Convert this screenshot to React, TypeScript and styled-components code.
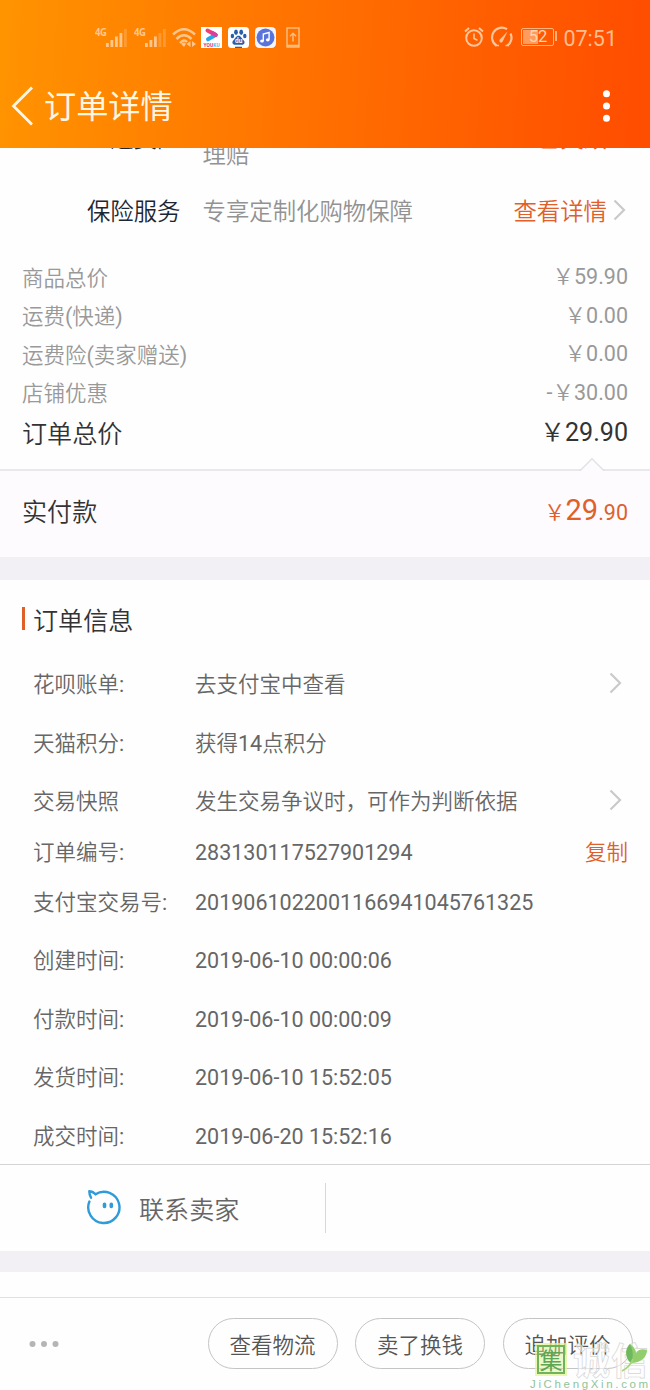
import React from 'react';
import styled, { createGlobalStyle } from 'styled-components';

const Global = createGlobalStyle`
  * { box-sizing: border-box; }
  html, body { margin: 0; padding: 0; background: #fdfdfe; }
  body {
    font-family: Roboto, "Noto Sans CJK SC DemiLight", "Noto Sans CJK SC Light", "Noto Sans CJK SC", sans-serif;
    overflow: hidden;
  }
`;

const Screen = styled.main`
  position: relative;
  width: 650px;
  height: 1390px;
  overflow: hidden;
  display: flex;
  flex-direction: column;
  background: #fefefe;
`;

/* ---------- header ---------- */

const Header = styled.header`
  flex: none;
  position: relative;
  z-index: 1;
  height: 148px;
  background: linear-gradient(94deg, #ff9400 0%, #ff7200 46%, #ff4e00 97%);
`;

const StatusBar = styled.div`
  height: 74px;
  display: flex;
  justify-content: space-between;
  padding: 26px 33px 0 95px;
  color: #ffc791;
`;

const StatusGroup = styled.div`
  display: flex;
  height: 23px;
`;

const Network = styled.div`
  display: flex;
  width: 39px;
`;

const NetworkLabel = styled.span`
  font: 700 11px/12px "Open Sans", Roboto, sans-serif;
  letter-spacing: -0.6px;
  width: 11px;
  flex: none;
  transform: scaleX(0.86);
  transform-origin: left;
`;

const AppIcons = styled.div`
  display: flex;
  gap: 6px;
  padding-top: 1px;
  & > :first-child { margin: 0 -2px 0 -1px; }
  & > :last-child { margin-left: 4px; }
`;

const GaugeSlot = styled.span`
  margin-left: 6px;
`;

const Battery = styled.div`
  position: relative;
  width: 33px;
  height: 18px;
  margin: 2px 0 0 7px;
  border: 1.5px solid #ffb27c;
  border-radius: 2px;
  background: linear-gradient(90deg, #ff9c5c 52%, transparent 52%);
  background-clip: content-box;
  padding: 1px;
  font: 400 16.5px/14px Roboto, sans-serif;
  text-align: center;
  color: #ffd3b0;
  &::after {
    content: '';
    position: absolute;
    left: 33px;
    top: 2px;
    width: 2px;
    height: 10px;
    background: #ffb27c;
  }
`;

const Clock = styled.span`
  margin-left: 9px;
  font: 400 21.5px/25px Roboto, sans-serif;
  color: #ffbd90;
`;

const TitleBar = styled.div`
  height: 64px;
  display: flex;
  align-items: center;
  padding: 0 38px 1px 10px;
`;

const Title = styled.h1`
  flex: 1;
  margin: 0 0 0 9px;
  padding-top: 3px;
  font: 400 32.2px/48px Roboto, "Noto Sans CJK SC", sans-serif;
  color: #fff7e6;
`;

/* ---------- services ---------- */

const Services = styled.section`
  flex: none;
  height: 140px;
  margin-top: -30px;
  font-size: 23.4px;
  line-height: 28px;
`;

const ServiceRow = styled.div<{ $height: number; $top: number }>`
  display: flex;
  height: ${p => p.$height}px;
  padding: ${p => p.$top}px 23px 0 0;
`;

const ServiceName = styled.span`
  width: 180.5px;
  text-align: right;
  color: #1c2733;
`;

const ServiceText = styled.span<{ $drop?: number }>`
  flex: 1;
  margin-left: 22px;
  padding-top: ${p => p.$drop ?? 0}px;
  color: #929292;
`;

const ServiceLink = styled.span`
  color: #e0602a;
  margin-right: 6px;
`;

const ArrowSlot = styled.span`
  display: flex;
  align-items: center;
  width: 14px;
  height: 24px;
`;

/* ---------- prices ---------- */

const Prices = styled.section`
  flex: none;
  height: 211px;
`;

const PriceRow = styled.div<{ $total?: boolean }>`
  display: flex;
  justify-content: space-between;
  align-items: center;
  height: ${p => (p.$total ? 43 : 38.5)}px;
  padding: ${p => (p.$total ? 2 : 3)}px 22px 0;
  font-size: ${p => (p.$total ? 25.1 : 21.5)}px;
  line-height: 30px;
  color: ${p => (p.$total ? '#333' : '#999')};
`;

const Amount = styled.span`
  padding-bottom: 3px;
`;

const Paid = styled.section`
  flex: none;
  position: relative;
  display: flex;
  justify-content: space-between;
  align-items: center;
  height: 88px;
  padding: 0 22px 8px;
  border-top: 2px solid #eae8ed;
  background: #fdfbfe;
  font-size: 25.1px;
  color: #333;
`;

const Notch = styled.svg`
  position: absolute;
  top: -14px;
  right: 44px;
`;

const PaidAmount = styled.span`
  font-size: 21.5px;
  color: #e0602a;
  b {
    font-size: 29px;
    font-weight: 400;
  }
`;

const Band = styled.div<{ $height: number }>`
  flex: none;
  height: ${p => p.$height}px;
  background: #f2f0f4;
`;

/* ---------- order information ---------- */

const Info = styled.section`
  flex: none;
  height: 584px;
`;

const InfoTitle = styled.h2`
  display: flex;
  align-items: center;
  height: 76px;
  margin: 0;
  padding: 1px 0 0 21.5px;
  font-size: 25.1px;
  font-weight: 400;
  color: #333;
  &::before {
    content: '';
    width: 3.5px;
    height: 23px;
    margin-right: 8px;
    background: #e0602a;
  }
`;

const InfoRow = styled.div<{ $height: number }>`
  display: flex;
  align-items: center;
  height: ${p => p.$height}px;
  padding: 0 22px 0 33px;
  font-size: 21.5px;
  line-height: 30px;
  color: #666;
`;

const InfoLabel = styled.span`
  width: 162px;
`;

const InfoValue = styled.span`
  flex: 1;
`;

const CopyLink = styled.span`
  color: #e0602a;
`;

const RowArrow = styled.span`
  display: flex;
  width: 19px;
  padding-bottom: 4px;
`;

/* ---------- contact + bottom bar ---------- */

const Contact = styled.section`
  flex: none;
  display: flex;
  align-items: center;
  height: 87px;
  border-top: 1px solid #d4d4d4;
`;

const ContactSeller = styled.div`
  display: flex;
  align-items: center;
  gap: 17px;
  width: 326px;
  height: 50px;
  padding: 0 0 1px 85px;
  border-right: 1px solid #d8d8d8;
  font-size: 25.1px;
  color: #666;
`;

const Actions = styled.footer`
  flex: none;
  display: flex;
  align-items: center;
  height: 93px;
  margin-top: 25px;
  padding: 0 17.5px 1px 29px;
  border-top: 1px solid #e0e0e0;
`;

const MoreDots = styled.svg`
  margin-right: auto;
`;

const Pill = styled.button`
  width: 130px;
  height: 51px;
  margin: 0 0 0 17.5px;
  padding: 0 0 1px;
  border: 1px solid #c4c4c4;
  border-radius: 26px;
  background: transparent;
  font: inherit;
  font-size: 21.5px;
  color: #555;
`;

/* ---------- site watermark ---------- */

const Watermark = styled.div`
  position: absolute;
  left: 530px;
  top: 1341px;
  width: 120px;
  height: 49px;
`;

const MarkTop = styled.div`
  display: flex;
  align-items: center;
  height: 36px;
  padding-left: 7px;
`;

const Seal = styled.span`
  width: 28px;
  height: 29px;
  border: 2px solid #71b35c;
  outline: 2px solid rgba(225, 246, 150, 0.75);
  background: rgba(215, 242, 140, 0.45);
  font: 400 23px/24px "Noto Sans CJK SC", sans-serif;
  text-align: center;
  color: #5da653;
`;

const Outlined = styled.span`
  margin-left: 8px;
  font: 700 37px/36px "Noto Sans CJK SC", sans-serif;
  letter-spacing: 1px;
  color: rgba(255, 255, 255, 0.6);
  -webkit-text-stroke: 0.7px #d6d6d6;
`;

const Leaf = styled.svg`
  position: absolute;
  left: 90px;
  top: 2px;
`;

const Domain = styled.div`
  font: 400 11.5px/14px "Liberation Sans", sans-serif;
  letter-spacing: 2.65px;
  white-space: nowrap;
  color: #8fc59a;
`;

/* ---------- icons ---------- */

const Signal = ({ strong }: { strong: number }) => (
  <svg width="23" height="22" viewBox="0 0 23 22" fill="#ffc68c">
    {[4, 7, 10.5, 14, 18].map((h, i) => (
      <rect key={i} x={i * 4.5} y={21 - h} width="2.8" height={h} opacity={i < strong ? 1 : 0.35} />
    ))}
  </svg>
);

const Wifi = () => (
  <svg width="25" height="22" viewBox="0 0 25 22" fill="none" stroke="#ffc68c" strokeWidth="2.5">
    <path d="M1 7.5Q12 -3 23 7.5" />
    <path d="M4.5 12Q12 4.5 19.5 12" />
    <path d="M8 16Q12 11.500 15 15" />
    <path d="M12 20l-3-3.200q3-2.400 5 0z" fill="#ffc68c" stroke="none" />
    <path d="M18.500 14v6l-4-3zM20 14v6l4-3z" fill="#ffc68c" stroke="none" />
  </svg>
);

const VideoApp = () => (
  <svg width="21" height="21" viewBox="0 0 21 21">
    <rect width="21" height="21" fill="#fff" />
    <path d="M6.5 3.5L14.5 7.8" stroke="#f43f73" strokeWidth="4" strokeLinecap="round" />
    <path d="M14.5 8L7 12.3" stroke="#26a9ea" strokeWidth="4" strokeLinecap="round" />
    <path d="M11 5.8L14.8 8" stroke="#d8409b" strokeWidth="4" strokeLinecap="round" />
    <text x="2.6" y="19.6" fontSize="4.8" fontWeight="700" fontFamily="Roboto" fill="#c2347b" textLength="16">
      YOU<tspan fill="#4bbbe2">KU</tspan>
    </text>
  </svg>
);

const PawApp = () => (
  <svg width="21" height="21" viewBox="0 0 21 21">
    <rect width="21" height="21" rx="3.5" fill="#fff" />
    <g fill="#285fa9">
      <ellipse cx="8" cy="5.2" rx="1.9" ry="2.7" />
      <ellipse cx="13.2" cy="5.2" rx="1.9" ry="2.7" />
      <ellipse cx="4.4" cy="9" rx="1.7" ry="2.3" />
      <ellipse cx="16.8" cy="9" rx="1.7" ry="2.3" />
      <path d="M10.5 8.8c2.6 0 3 2.6 4.8 4.2 2.4 2 1.2 5-1.6 4.8-2.2-.2-4.2-.2-6.4 0-2.8.2-4-2.8-1.6-4.8 1.8-1.6 2.2-4.2 4.8-4.2z" />
      <rect x="7" y="19.7" width="7" height="1.3" />
    </g>
    <text x="7" y="16.4" fontSize="6.5" fontWeight="700" fontFamily="Roboto" fill="#fff">du</text>
  </svg>
);

const MusicApp = () => (
  <svg width="21" height="21" viewBox="0 0 21 21">
    <rect width="21" height="21" rx="4.5" fill="#f4f4ff" />
    <circle cx="10.5" cy="10.5" r="9" fill="#5a74dc" />
    <path d="M8.3 14V7l5.8-1.5v7" fill="none" stroke="#fff" strokeWidth="1.4" />
    <ellipse cx="7" cy="14" rx="1.9" ry="1.6" fill="#fff" />
    <ellipse cx="12.8" cy="12.8" rx="1.9" ry="1.6" fill="#fff" />
  </svg>
);

const PhoneUp = () => (
  <svg width="14" height="21" viewBox="0 0 14 21" fill="none" stroke="#ffbf80">
    <rect x="1" y="1" width="12" height="19" strokeWidth="1.4" />
    <path d="M1 18.7h12" strokeWidth="2" />
    <path d="M7 14.5V6.5M4 9.3L7 6.3l3 3" strokeWidth="1.4" />
  </svg>
);

const Alarm = () => (
  <svg width="20" height="22" viewBox="0 0 20 22" fill="none" stroke="#ffc69a" strokeWidth="2">
    <circle cx="10" cy="12" r="7.8" />
    <path d="M10 7.5V12.5l3.5 1.8" strokeWidth="1.6" />
    <path d="M1 5.500L5 2M19 5.500L15 2" />
  </svg>
);

const Gauge = () => (
  <svg width="24" height="22" viewBox="0 0 24 22" fill="none" stroke="#ffc69a" strokeWidth="2.2">
    <path d="M6.5 19.5A9.5 9.5 0 0 1 17 3.2" />
    <path d="M20.5 7.5A9.5 9.5 0 0 1 17.5 19.5" />
    <path d="M17.5 5.5L9.8 13.5a1.7 1.7 0 0 0 2.6 2.4z" fill="#ffc69a" stroke="none" />
    <path d="M5 19.5h4M15.5 19.5h3.5" strokeWidth="1.4" />
  </svg>
);

const Back = () => (
  <svg width="25" height="40" viewBox="0 0 25 40" fill="none" stroke="#fff7e6" strokeWidth="2.8">
    <path d="M22 1.5L3.5 20L22 38.5" />
  </svg>
);

const Kebab = () => (
  <svg width="11" height="36" viewBox="0 0 11 36" fill="#fff">
    <circle cx="5.5" cy="5.8" r="3.5" />
    <circle cx="5.5" cy="18" r="3.5" />
    <circle cx="5.5" cy="30.2" r="3.5" />
  </svg>
);

const Chevron = () => (
  <svg width="14" height="22" viewBox="0 0 14 22" fill="none" stroke="#cacaca" strokeWidth="2.2">
    <path d="M1.5 1.5L11 11L1.5 20.5" />
  </svg>
);

const Bubble = () => (
  <svg width="37" height="37" viewBox="0 0 37 37" fill="none" stroke="#2f9bd8" strokeWidth="2.4" strokeLinecap="round" strokeLinejoin="round">
    <path d="M10.5 5.2A15.6 15.6 0 1 1 4.4 12.5" />
    <path d="M10.500 5.200Q7.500 2.200 4.300 2.300Q4.300 6 6 8.700" />
    <path d="M19.500 15.200v2.300M26.300 15.200v2.300" strokeWidth="3.600" />
  </svg>
);

/* ---------- data ---------- */

const prices = [
  ['商品总价', '￥59.90'],
  ['运费(快递)', '￥0.00'],
  ['运费险(卖家赠送)', '￥0.00'],
  ['店铺优惠', '-￥30.00'],
];

type InfoItem = { label: string; value: string; height: number; arrow?: boolean; copy?: boolean };

const info: InfoItem[] = [
  { label: '花呗账单:', value: '去支付宝中查看', height: 58.5, arrow: true },
  { label: '天猫积分:', value: '获得14点积分', height: 58.5 },
  { label: '交易快照', value: '发生交易争议时，可作为判断依据', height: 58, arrow: true },
  { label: '订单编号:', value: '283130117527901294', height: 43, copy: true },
  { label: '支付宝交易号:', value: '2019061022001166941045761325', height: 58 },
  { label: '创建时间:', value: '2019-06-10 00:00:06', height: 58.5 },
  { label: '付款时间:', value: '2019-06-10 00:00:09', height: 58.5 },
  { label: '发货时间:', value: '2019-06-10 15:52:05', height: 58.5 },
  { label: '成交时间:', value: '2019-06-20 15:52:16', height: 58 },
];

const actions = ['查看物流', '卖了换钱', '追加评价'];

export default function App() {
  return (
    <Screen lang="zh-CN">
      <Global />
      <Header>
        <StatusBar>
          <StatusGroup>
            <Network><NetworkLabel>4G</NetworkLabel><Signal strong={4} /></Network>
            <Network><NetworkLabel>4G</NetworkLabel><Signal strong={3} /></Network>
            <AppIcons>
              <Wifi />
              <VideoApp />
              <PawApp />
              <MusicApp />
              <PhoneUp />
            </AppIcons>
          </StatusGroup>
          <StatusGroup>
            <Alarm />
            <GaugeSlot><Gauge /></GaugeSlot>
            <Battery>52</Battery>
            <Clock>07:51</Clock>
          </StatusGroup>
        </StatusBar>
        <TitleBar>
          <Back />
          <Title>订单详情</Title>
          <Kebab />
        </TitleBar>
      </Header>

      <Services>
        <ServiceRow $height={60} $top={7}>
          <ServiceName>运费险</ServiceName>
          <ServiceText $drop={16}>理赔</ServiceText>
          <ServiceLink>已失效</ServiceLink>
          <ArrowSlot />
        </ServiceRow>
        <ServiceRow $height={80} $top={19.5}>
          <ServiceName>保险服务</ServiceName>
          <ServiceText>专享定制化购物保障</ServiceText>
          <ServiceLink>查看详情</ServiceLink>
          <ArrowSlot><Chevron /></ArrowSlot>
        </ServiceRow>
      </Services>

      <Prices>
        {prices.map(([label, amount]) => (
          <PriceRow key={label}><span>{label}</span><Amount>{amount}</Amount></PriceRow>
        ))}
        <PriceRow $total><span>订单总价</span><Amount>￥29.90</Amount></PriceRow>
      </Prices>
      <Paid>
        <Notch width="28" height="16" viewBox="0 0 28 16">
          <path d="M2 13.5L14 1.5L26 13.5V16H2z" fill="#fdfbfe" />
          <path d="M1 13.3H2.5L14 1.8L25.5 13.3H27" fill="none" stroke="#e4e2e7" strokeWidth="1.6" />
        </Notch>
        <span>实付款</span>
        <PaidAmount>￥<b>29</b>.90</PaidAmount>
      </Paid>
      <Band $height={23} />

      <Info>
        <InfoTitle>订单信息</InfoTitle>
        {info.map(item => (
          <InfoRow key={item.label} $height={item.height}>
            <InfoLabel>{item.label}</InfoLabel>
            <InfoValue>{item.value}</InfoValue>
            {item.arrow && <RowArrow><Chevron /></RowArrow>}
            {item.copy && <CopyLink>复制</CopyLink>}
          </InfoRow>
        ))}
      </Info>

      <Contact>
        <ContactSeller><Bubble /><span>联系卖家</span></ContactSeller>
      </Contact>
      <Band $height={21} />

      <Actions>
        <MoreDots width="30" height="8" viewBox="0 0 30 8" fill="#b5b5b5">
          <circle cx="3.5" cy="4" r="3" />
          <circle cx="15" cy="4" r="3" />
          <circle cx="26.5" cy="4" r="3" />
        </MoreDots>
        {actions.map(a => <Pill key={a}>{a}</Pill>)}
      </Actions>

      <Watermark>
        <MarkTop>
          <Seal>集</Seal>
          <Outlined>诚信</Outlined>
        </MarkTop>
        <Leaf width="32" height="30" viewBox="0 0 32 30">
          <path d="M11 20C5 15 4 6 10 1c4 3 6 6 6 9C19 5 24 6 27 7c0 7-6 13-16 13z" fill="#92cf6c" />
          <path d="M10 1c-5 5-5 14 1 19C13 15 14 9 10 1z" fill="#6fb860" />
          <path d="M13 16Q10 24 2 28" fill="none" stroke="#a5d77e" strokeWidth="1.8" />
        </Leaf>
        <Domain>JiChengXin.com</Domain>
      </Watermark>
    </Screen>
  );
}
